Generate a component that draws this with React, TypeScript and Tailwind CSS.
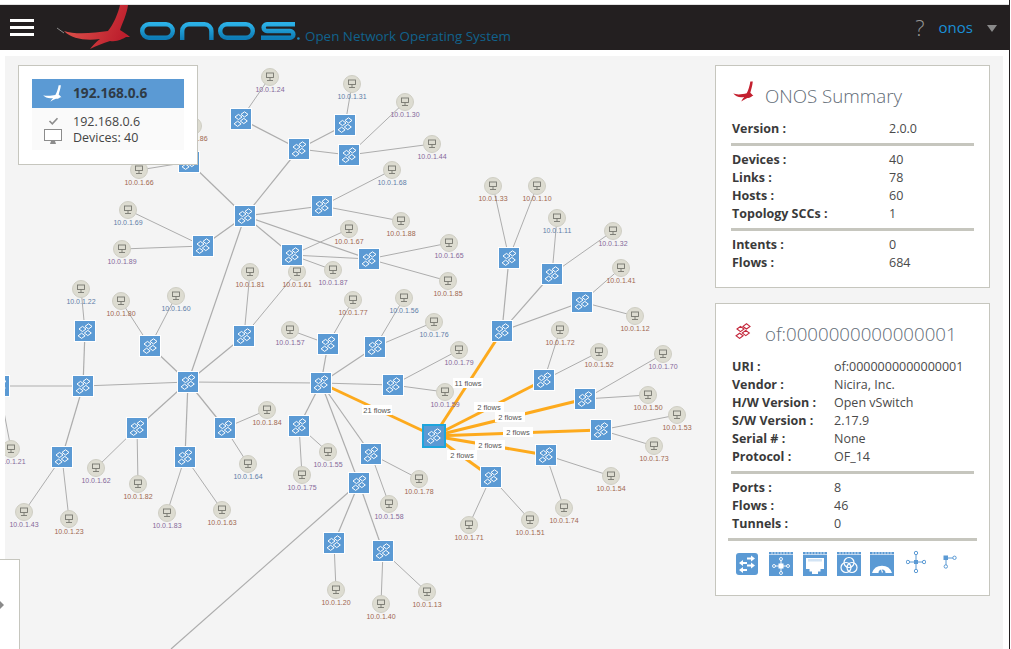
const ORANGE = "#a0674f";
const PURPLE = "#84699a";
const BLUE = "#5f7ea8";

// device centres, in page coordinates
const devices: [number, number][] = [
  [241, 119], [345, 125], [299, 149], [349, 155], [189, 162], [245, 216], [322, 206], [203, 246],
  [292, 255], [369, 259], [509, 258], [552, 274], [582, 302], [502, 331], [244, 336], [328, 344],
  [375, 347], [85, 331], [150, 346], [188, 382], [83, 386], [-1, 386], [321, 383], [393, 385],
  [225, 428], [137, 428], [62, 457], [185, 457], [299, 426], [371, 454], [359, 483], [544, 380],
  [585, 399], [601, 430], [546, 455], [491, 477], [334, 543], [383, 551],
];

const links: [number, number, number, number][] = [
  [241, 119, 299, 149], [345, 125, 299, 149], [299, 149, 349, 155], [299, 149, 245, 216],
  [189, 162, 245, 216], [245, 216, 322, 206], [245, 216, 203, 246], [245, 216, 292, 255],
  [245, 216, 369, 259], [245, 216, 188, 382], [292, 255, 369, 259], [244, 336, 188, 382],
  [188, 382, 150, 346], [188, 382, 83, 386], [-1, 386, 83, 386], [83, 386, 85, 331],
  [83, 386, 62, 457], [188, 382, 137, 428], [188, 382, 185, 457], [188, 382, 225, 428],
  [188, 382, 321, 383], [321, 383, 328, 344], [321, 383, 375, 347], [321, 383, 393, 385],
  [321, 383, 299, 426], [321, 383, 371, 454], [321, 383, 359, 483], [359, 483, 334, 543],
  [359, 483, 383, 551], [359, 483, 171, 649], [502, 331, 509, 258], [502, 331, 552, 274],
  [502, 331, 582, 302],
];

const flows: [number, number, string, number, number][] = [
  [321, 383, "21 flows", 377, 410],
  [502, 331, "11 flows", 468, 383],
  [544, 380, "2 flows", 489, 407],
  [585, 399, "2 flows", 510, 417],
  [601, 430, "2 flows", 518, 432],
  [546, 455, "2 flows", 490, 445],
  [491, 477, "2 flows", 462, 455],
];

// host x, host y, last octets, device x, device y, label colour
const hosts: [number, number, string, number, number, string][] = [
  [270, 77, "24", 241, 119, PURPLE], [352, 84, "31", 345, 125, BLUE], [405, 102, "30", 349, 155, PURPLE],
  [432, 144, "44", 349, 155, PURPLE], [139, 170, "66", 189, 162, ORANGE], [193, 126, "86", 189, 162, ORANGE],
  [392, 170, "68", 322, 206, BLUE], [128, 210, "69", 203, 246, BLUE], [122, 249, "89", 203, 246, PURPLE],
  [349, 229, "67", 292, 255, ORANGE], [401, 221, "88", 322, 206, ORANGE], [333, 270, "87", 292, 255, PURPLE],
  [449, 243, "65", 369, 259, PURPLE], [448, 281, "85", 369, 259, ORANGE], [250, 272, "81", 244, 336, ORANGE],
  [297, 272, "61", 244, 336, ORANGE], [290, 330, "57", 328, 344, PURPLE], [353, 300, "77", 328, 344, ORANGE],
  [404, 298, "56", 375, 347, BLUE], [434, 322, "76", 375, 347, BLUE], [459, 350, "79", 393, 385, PURPLE],
  [445, 392, "59", 393, 385, PURPLE], [81, 289, "22", 85, 331, BLUE], [121, 301, "80", 150, 346, ORANGE],
  [176, 296, "60", 150, 346, BLUE], [493, 186, "33", 509, 258, ORANGE], [537, 186, "10", 509, 258, ORANGE],
  [557, 218, "11", 552, 274, BLUE], [613, 231, "32", 552, 274, PURPLE], [621, 268, "41", 582, 302, ORANGE],
  [635, 316, "12", 582, 302, ORANGE], [560, 330, "72", 544, 380, ORANGE], [599, 352, "52", 544, 380, ORANGE],
  [663, 354, "70", 585, 399, PURPLE], [648, 395, "50", 585, 399, ORANGE], [677, 415, "53", 601, 430, ORANGE],
  [654, 446, "73", 601, 430, ORANGE], [611, 476, "54", 546, 455, ORANGE], [564, 508, "74", 546, 455, ORANGE],
  [469, 525, "71", 491, 477, ORANGE], [530, 520, "51", 491, 477, ORANGE], [267, 410, "84", 225, 428, ORANGE],
  [248, 464, "64", 225, 428, BLUE], [96, 468, "62", 137, 428, PURPLE], [138, 484, "82", 137, 428, ORANGE],
  [167, 513, "83", 185, 457, PURPLE], [222, 510, "63", 185, 457, ORANGE], [302, 475, "75", 299, 426, PURPLE],
  [328, 452, "55", 299, 426, PURPLE], [419, 479, "78", 371, 454, ORANGE], [389, 504, "58", 371, 454, PURPLE],
  [11, 449, "21", -1, 386, PURPLE], [24, 512, "43", 62, 457, PURPLE], [69, 519, "23", 62, 457, ORANGE],
  [336, 590, "20", 334, 543, ORANGE], [381, 604, "40", 383, 551, ORANGE], [427, 592, "13", 383, 551, ORANGE],
];

const BIRD =
  "M64 31C75 35 95 33 108 31C113 25 118 14 120 5L128 5C127 14 122 24 120 30C123 32 127 34 130 37L126 37C122 39 118 42 110 41C103 43 96 46 90 49C93 45 96 42 100 39C86 41 72 39 64 31Z";

function Bird({ color, className }: { color: string; className: string }) {
  return (
    <svg viewBox="60 4 72 46" preserveAspectRatio="none" className={className}>
      <path d={BIRD} fill={color} />
    </svg>
  );
}

function SwitchGlyph({ color, width = 1 }: { color: string; width?: number }) {
  return (
    <g fill="none" stroke={color} strokeWidth={width}>
      <path d="M10 5.4l3.5-2.6 3.5 2.6-3.5 2.6zM4 8l3.5-2.6L11 8l-3.5 2.6z" />
      <path d="M9.3 12l3.5-2.6 3.5 2.6-3.5 2.6zM3.1 14.8l3.5-2.6 3.5 2.6-3.5 2.6z" />
    </g>
  );
}

function Topology() {
  return (
    <svg viewBox="5 56 998 593" className="block h-full w-full">
      {links.map(([x1, y1, x2, y2]) => (
        <line key={`${x1}-${y1}-${x2}-${y2}`} x1={x1} y1={y1} x2={x2} y2={y2} stroke="#adadad" strokeWidth={1.2} />
      ))}
      {hosts.map(([x, y, name, dx, dy]) => (
        <line key={name} x1={x} y1={y} x2={dx} y2={dy} stroke="#adadad" strokeWidth={1} />
      ))}
      {flows.map(([x, y, label, lx]) => (
        <line key={`${label}-${lx}`} x1={x} y1={y} x2={434} y2={436} stroke="#fdaa1d" strokeWidth={3} />
      ))}
      {hosts.map(([x, y, name, , , color]) => (
        <g key={name}>
          <circle cx={x} cy={y} r={8.5} fill="#dddcd1" stroke="#cfcec4" strokeWidth={1} />
          <g fill="none" stroke="#77776f" strokeWidth={0.9}>
            <rect x={x - 3.5} y={y - 4} width={7} height={4.5} />
            <path d={`M${x} ${y + 0.5}v3M${x - 3} ${y + 3.5}h6`} />
          </g>
          <text x={x} y={y + 14.5} textAnchor="middle" fontSize={7} fontFamily="Liberation Sans" fill={color}>
            10.0.1.{name}
          </text>
        </g>
      ))}
      {devices.map(([x, y]) => (
        <g key={`${x}-${y}`} transform={`translate(${x - 10} ${y - 10})`}>
          <rect x={-1} y={-1} width={22} height={22} fill="#ffffff" />
          <rect width={20} height={20} fill="#5b9ad4" />
          <SwitchGlyph color="#ffffff" />
        </g>
      ))}
      <g transform="translate(424 426)">
        <rect x={-2} y={-2} width={24} height={24} fill="#1ea5dc" />
        <rect width={20} height={20} fill="#5b9ad4" />
        <SwitchGlyph color="#ffffff" />
      </g>
      {flows.map(([, , label, lx, ly]) => (
        <g key={`${label}-${lx}-t`}>
          <rect x={lx - 15} y={ly - 5} width={30} height={10} fill="#ffffff" />
          <text x={lx} y={ly + 2.5} textAnchor="middle" fontSize={7.5} fontFamily="Liberation Sans" fill="#555555">
            {label}
          </text>
        </g>
      ))}
    </svg>
  );
}

function Logo() {
  return (
    <svg viewBox="57 5 243 45" className="h-[45px] w-[243px] shrink-0">
      <defs>
        <linearGradient id="bird" x1="0" y1="0" x2="1" y2="0.3">
          <stop offset="0" stopColor="#e25a50" />
          <stop offset="1" stopColor="#bd1f2d" />
        </linearGradient>
        <linearGradient id="letters" x1="0" y1="0" x2="0" y2="1">
          <stop offset="0" stopColor="#2bb0e6" />
          <stop offset="1" stopColor="#0e7cb6" />
        </linearGradient>
      </defs>
      <path d="M57 28l7 5" stroke="#8a8a8a" strokeWidth={1} />
      <path d={BIRD} fill="url(#bird)" />
      <g fill="none" stroke="url(#letters)" strokeWidth={4.4}>
        <rect x={142.2} y={24.2} width={30.6} height={13.6} rx={6.8} />
        <path d="M182.2 40V31a6.8 6.8 0 0 1 6.8-6.8h15.6a6.8 6.8 0 0 1 6.8 6.8v9" />
        <rect x={220.2} y={24.2} width={32.6} height={13.6} rx={6.8} />
        <path d="M295 24.2H267a3.4 3.4 0 0 0 0 6.8H290a3.4 3.4 0 0 1 0 6.8H261" />
      </g>
      <circle cx={298.4} cy={38.5} r={1.3} fill="#1b8bc4" />
    </svg>
  );
}

function Row({ label, value, labelWidth }: { label: string; value: string; labelWidth: string }) {
  return (
    <div className="flex h-[18px] items-center text-[12.5px]">
      <span className={`${labelWidth} font-bold text-[#3a3a3a]`}>{label}</span>
      <span className="text-[#4a4a4a]">{value}</span>
    </div>
  );
}

function Tray({ children }: { children: React.ReactNode }) {
  return (
    <svg viewBox="0 0 24 24" className="h-6 w-6">
      <path d="M0 0h24v2.4H0z" fill="#5b9ad4" />
      <path d="M3 0v2.4M6 0v2.4M9 0v2.4M12 0v2.4M15 0v2.4M18 0v2.4M21 0v2.4" stroke="#ffffff" strokeWidth={0.7} />
      <rect y={3} width={24} height={21} fill="#5b9ad4" />
      {children}
    </svg>
  );
}

function Actions() {
  return (
    <div className="mt-[11px] flex items-center pl-[4px]">
      <svg viewBox="0 0 22 22" className="h-[22px] w-[22px]">
        <rect width={22} height={22} rx={3} fill="#5b9ad4" />
        <g fill="#ffffff">
          <path d="M11 4.5h4V2.5l4 3-4 3v-2h-4z" />
          <path d="M11 9h-4v-2l-4 3 4 3v-2h4z" />
          <path d="M11 11.5h4v-2l4 3-4 3v-2h-4z" />
          <path d="M11 16h-4v-2l-4 3 4 3v-2h4z" />
        </g>
      </svg>
      <div className="ml-[11px]">
        <Tray>
          <g fill="none" stroke="#ffffff" strokeWidth={0.9}>
            <path d="M12 8v4M12 16v4M6 14h4M14 14h4" />
            <circle cx={12} cy={7} r={1.5} />
            <circle cx={12} cy={21} r={1.5} />
            <circle cx={5} cy={14} r={1.5} />
            <circle cx={19} cy={14} r={1.5} />
          </g>
          <rect x={9.5} y={11.5} width={5} height={5} fill="#ffffff" />
        </Tray>
      </div>
      <div className="ml-[10px]">
        <Tray>
          <path d="M3 6h18v11h-3.5v2.5h-2.5V22H9v-2.5H6.5V17H3z" fill="#ffffff" />
          <path d="M6 7v2.5M8 7v2.5M10 7v2.5M12 7v2.5M14 7v2.5M16 7v2.5M18 7v2.5" stroke="#9cc2e6" strokeWidth={0.9} />
        </Tray>
      </div>
      <div className="ml-[10px]">
        <Tray>
          <g fill="none" stroke="#ffffff" strokeWidth={1.2}>
            <circle cx={12} cy={10.5} r={5} />
            <circle cx={9} cy={15.5} r={5} />
            <circle cx={15} cy={15.5} r={5} />
          </g>
        </Tray>
      </div>
      <div className="ml-[9px]">
        <Tray>
          <path d="M2 21a10.5 10.5 0 0 1 20 0h-6.5a3.5 3.5 0 0 0-7 0z" fill="#ffffff" />
          <path d="M12 21l-2-7 3 6z" fill="#ffffff" />
        </Tray>
      </div>
      <svg viewBox="0 0 20 24" className="ml-[12px] h-6 w-5 -translate-y-[2px]">
        <g fill="none" stroke="#5b9ad4" strokeWidth={1}>
          <path d="M10 5v14M3 12h14" />
          <circle cx={10} cy={3} r={1.7} fill="#ffffff" />
          <circle cx={10} cy={21} r={1.7} fill="#ffffff" />
          <circle cx={1.9} cy={12} r={1.7} fill="#ffffff" />
          <circle cx={18.1} cy={12} r={1.7} fill="#ffffff" />
        </g>
        <rect x={8} y={10} width={4} height={4} fill="#5b9ad4" />
      </svg>
      <svg viewBox="0 0 14 14" className="ml-[17px] h-[14px] w-[14px] -translate-y-[2px]">
        <g fill="none" stroke="#5b9ad4" strokeWidth={1}>
          <path d="M3 3h7M3 3v7" />
          <circle cx={11.5} cy={2.8} r={1.7} fill="#ffffff" />
          <circle cx={2.8} cy={11.5} r={1.7} fill="#ffffff" />
        </g>
        <rect x={0.5} y={0.5} width={4.5} height={4.5} fill="#5b9ad4" />
      </svg>
    </div>
  );
}

function Divider() {
  return <div className="-mr-px my-[5px] -ml-px h-[3px] bg-[#c6c6be]" />;
}

function SummaryPanel() {
  return (
    <section className="h-[223px] border border-[#c6c6be] bg-white px-[16px] pt-[16px]">
      <div className="flex h-[38px] items-start">
        <Bird color="#c4202f" className="-mt-[1px] h-[21px] w-[22px]" />
        <h2 className="ml-[11px] text-[18.7px] leading-[28px] font-light text-[#5f6b76]">ONOS Summary</h2>
      </div>
      <Row label="Version :" value="2.0.0" labelWidth="w-[157px]" />
      <Divider />
      <Row label="Devices :" value="40" labelWidth="w-[157px]" />
      <Row label="Links :" value="78" labelWidth="w-[157px]" />
      <Row label="Hosts :" value="60" labelWidth="w-[157px]" />
      <Row label="Topology SCCs :" value="1" labelWidth="w-[157px]" />
      <Divider />
      <Row label="Intents :" value="0" labelWidth="w-[157px]" />
      <Row label="Flows :" value="684" labelWidth="w-[157px]" />
    </section>
  );
}

function DevicePanel() {
  return (
    <section className="h-[293px] border border-[#c6c6be] bg-white px-[16px] pt-[16px]">
      <div className="flex h-[38px] items-start">
        <svg viewBox="2 2 16 16" className="mt-[3px] ml-[3px] h-4 w-4">
          <SwitchGlyph color="#c4283c" width={1.1} />
        </svg>
        <h2 className="ml-[14px] text-[18.7px] leading-[28px] font-light text-[#5f6b76]">of:0000000000000001</h2>
      </div>
      <Row label="URI :" value="of:0000000000000001" labelWidth="w-[102px]" />
      <Row label="Vendor :" value="Nicira, Inc." labelWidth="w-[102px]" />
      <Row label="H/W Version :" value="Open vSwitch" labelWidth="w-[102px]" />
      <Row label="S/W Version :" value="2.17.9" labelWidth="w-[102px]" />
      <Row label="Serial # :" value="None" labelWidth="w-[102px]" />
      <Row label="Protocol :" value="OF_14" labelWidth="w-[102px]" />
      <Divider />
      <Row label="Ports :" value="8" labelWidth="w-[102px]" />
      <Row label="Flows :" value="46" labelWidth="w-[102px]" />
      <Row label="Tunnels :" value="0" labelWidth="w-[102px]" />
      <div className="-mx-[4px] mt-[5px] h-[3px] bg-[#c6c6be]" />
      <Actions />
    </section>
  );
}

function InstancePanel() {
  return (
    <div className="absolute top-[9px] left-[13px] h-[100px] w-[180px] border border-[#c6c6be] bg-white p-[13px]">
      <div className="flex h-[29px] items-center bg-[#5b9ad4] pl-[10px]">
        <Bird color="#ffffff" className="h-[17px] w-[20px]" />
        <span className="ml-[11px] text-[13.7px] font-bold text-[#2f3b47]">192.168.0.6</span>
      </div>
      <div className="flex h-[42px] bg-[#fafafa]">
        <div className="flex w-[41px] flex-col items-center pt-[9px]">
          <svg viewBox="0 0 12 10" className="ml-[1px] h-2 w-[11px]">
            <path d="M1 5l3.5 3.5L11 1.5" fill="none" stroke="#8c8c8c" strokeWidth={2} />
          </svg>
          <svg viewBox="0 0 18 16" className="mt-[4px] h-[16px] w-[18px]">
            <rect x={0.5} y={0.5} width={17} height={11} fill="#ffffff" stroke="#8c8c8c" />
            <path d="M7 12h4l1 3H6z" fill="#8c8c8c" />
          </svg>
        </div>
        <div className="flex flex-col pt-[6px] text-[12.5px] leading-[16px] text-[#444444]">
          <span>192.168.0.6</span>
          <span>Devices: 40</span>
        </div>
      </div>
    </div>
  );
}

export default function App() {
  return (
    <div className="flex h-[649px] w-[1011px] overflow-hidden bg-white font-['Open_Sans',sans-serif]">
      <div className="flex w-[1009px] flex-col">
        <div className="h-[5px] border-b border-[#e2e2e2]" />
        <header className="flex h-[45px] items-center bg-[#231f20] pl-[10px]">
          <div className="flex w-6 flex-col gap-1">
            <span className="h-[3px] bg-white" />
            <span className="h-[3px] bg-white" />
            <span className="h-[3px] bg-white" />
          </div>
          <div className="ml-[23px]">
            <Logo />
          </div>
          <span className="mt-[17px] ml-[5px] text-[13.4px] text-[#11628c]">Open Network Operating System</span>
          <div className="ml-auto flex items-center pr-[12px]">
            <span className="text-[22px] font-light text-[#969696]">?</span>
            <span className="ml-[14px] text-[15px] text-[#1a8fd6]">onos</span>
            <span className="mt-[2px] ml-[14px] h-0 w-0 border-x-[5px] border-t-[7px] border-x-transparent border-t-[#8a8a8a]" />
          </div>
        </header>
        <main className="relative mt-[6px] mr-[6px] ml-[5px] h-[593px] bg-[#f4f4f4]">
          <Topology />
          <InstancePanel />
          <div className="absolute top-[9px] left-[710px] flex w-[275px] flex-col gap-[15px]">
            <SummaryPanel />
            <DevicePanel />
          </div>
          <div className="absolute top-[503px] -left-[5px] flex h-[90px] w-[20px] items-center border-t border-r border-[#c6c6be] bg-white">
            <span className="h-0 w-0 border-y-[4px] border-l-[4px] border-y-transparent border-l-[#8a8a8a]" />
          </div>
        </main>
      </div>
      <div className="h-full w-px bg-[#231f20]" />
    </div>
  );
}
